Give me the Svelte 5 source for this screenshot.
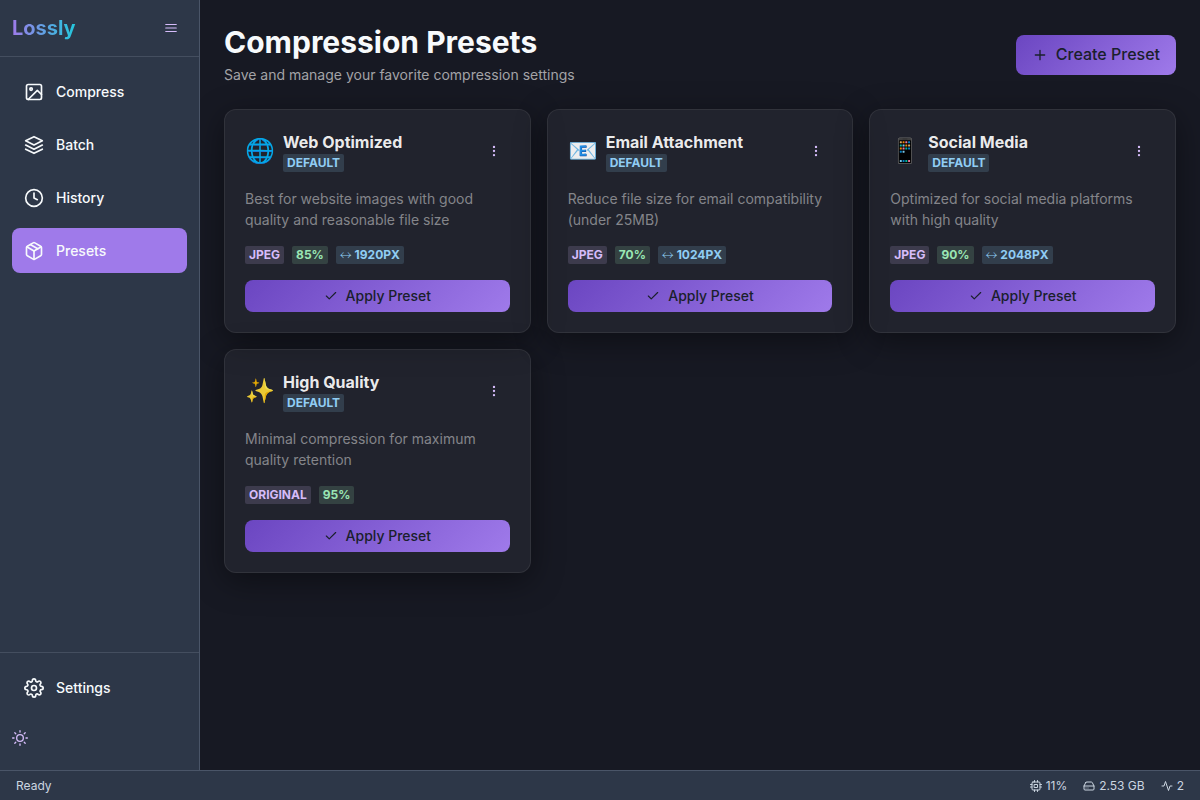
<script>
  const icons = {
    image: '<rect x="3" y="3" width="18" height="18" rx="2" ry="2"/><circle cx="8.5" cy="8.5" r="1.5"/><polyline points="21 15 16 10 5 21"/>',
    layers: '<polygon points="12 2 2 7 12 12 22 7 12 2"/><polyline points="2 17 12 22 22 17"/><polyline points="2 12 12 17 22 12"/>',
    clock: '<circle cx="12" cy="12" r="10"/><polyline points="12 6 12 12 16 14"/>',
    box: '<line x1="16.5" y1="9.4" x2="7.5" y2="4.21"/><path d="M21 16V8a2 2 0 0 0-1-1.73l-7-4a2 2 0 0 0-2 0l-7 4A2 2 0 0 0 3 8v8a2 2 0 0 0 1 1.73l7 4a2 2 0 0 0 2 0l7-4A2 2 0 0 0 21 16z"/><polyline points="3.27 6.96 12 12.01 20.73 6.96"/><line x1="12" y1="22.08" x2="12" y2="12"/>',
    settings: '<circle cx="12" cy="12" r="3"/><path d="M19.4 15a1.65 1.65 0 0 0 .33 1.82l.06.06a2 2 0 0 1 0 2.83 2 2 0 0 1-2.83 0l-.06-.06a1.65 1.65 0 0 0-1.82-.33 1.65 1.65 0 0 0-1 1.51V21a2 2 0 0 1-2 2 2 2 0 0 1-2-2v-.09A1.65 1.65 0 0 0 9 19.4a1.65 1.65 0 0 0-1.82.33l-.06.06a2 2 0 0 1-2.83 0 2 2 0 0 1 0-2.83l.06-.06a1.65 1.65 0 0 0 .33-1.82 1.65 1.65 0 0 0-1.51-1H3a2 2 0 0 1-2-2 2 2 0 0 1 2-2h.09A1.65 1.65 0 0 0 4.6 9a1.65 1.65 0 0 0-.33-1.82l-.06-.06a2 2 0 0 1 0-2.83 2 2 0 0 1 2.83 0l.06.06a1.65 1.65 0 0 0 1.82.33H9a1.65 1.65 0 0 0 1-1.51V3a2 2 0 0 1 2-2 2 2 0 0 1 2 2v.09a1.65 1.65 0 0 0 1 1.51 1.65 1.65 0 0 0 1.82-.33l.06-.06a2 2 0 0 1 2.83 0 2 2 0 0 1 0 2.83l-.06.06a1.65 1.65 0 0 0-.33 1.82V9a1.65 1.65 0 0 0 1.51 1H21a2 2 0 0 1 2 2 2 2 0 0 1-2 2h-.09a1.65 1.65 0 0 0-1.51 1z"/>',
    sun: '<circle cx="12" cy="12" r="5"/><path d="M12 1v2M12 21v2M4.22 4.22l1.42 1.42M18.36 18.36l1.42 1.42M1 12h2M21 12h2M4.22 19.78l1.42-1.42M18.36 5.64l1.42-1.42"/>',
    menu: '<path d="M3 12h18M3 6h18M3 18h18"/>',
    plus: '<path d="M12 5v14M5 12h14"/>',
    check: '<polyline points="20 6 9 17 4 12"/>',
    more: '<circle cx="12" cy="12" r="1"/><circle cx="12" cy="5" r="1"/><circle cx="12" cy="19" r="1"/>',
    cpu: '<rect x="4" y="4" width="16" height="16" rx="2" ry="2"/><rect x="9" y="9" width="6" height="6"/><path d="M9 1v3M15 1v3M9 20v3M15 20v3M20 9h3M20 14h3M1 9h3M1 14h3"/>',
    drive: '<path d="M22 12H2"/><path d="M5.45 5.11L2 12v6a2 2 0 0 0 2 2h16a2 2 0 0 0 2-2v-6l-3.45-6.89A2 2 0 0 0 16.76 4H7.24a2 2 0 0 0-1.79 1.11z"/><path d="M6 16h.01M10 16h.01"/>',
    activity: '<polyline points="22 12 18 12 15 21 9 3 6 12 2 12"/>'
  };

  const nav = [
    { icon: 'image', label: 'Compress' },
    { icon: 'layers', label: 'Batch' },
    { icon: 'clock', label: 'History' },
    { icon: 'box', label: 'Presets', active: true }
  ];

  const presets = [
    { emoji: '🌐', name: 'Web Optimized', text: 'Best for website images with good quality and reasonable file size', format: 'jpeg', quality: 85, width: 1920 },
    { emoji: '📧', name: 'Email Attachment', text: 'Reduce file size for email compatibility (under 25MB)', format: 'jpeg', quality: 70, width: 1024 },
    { emoji: '📱', name: 'Social Media', text: 'Optimized for social media platforms with high quality', format: 'jpeg', quality: 90, width: 2048 },
    { emoji: '✨', name: 'High Quality', text: 'Minimal compression for maximum quality retention', format: 'original', quality: 95 }
  ];

  const stats = [
    { icon: 'cpu', value: '11%' },
    { icon: 'drive', value: '2.53 GB' },
    { icon: 'activity', value: '2' }
  ];
</script>

{#snippet icon(name, size)}
  <svg class="icon" width={size} height={size} viewBox="0 0 24 24" fill="none" stroke="currentColor" stroke-width="2" stroke-linecap="round" stroke-linejoin="round" aria-hidden="true">{@html icons[name]}</svg>
{/snippet}

<div class="app">
  <div class="body">
    <aside>
      <div class="brand">
        <span class="logo">Lossly</span>
        <button class="ghost" aria-label="Toggle sidebar">{@render icon('menu', 14)}</button>
      </div>
      <nav>
        {#each nav as item}
          <button class="item" class:active={item.active}>{@render icon(item.icon, 20)}<span>{item.label}</span></button>
        {/each}
      </nav>
      <div class="foot">
        <button class="item">{@render icon('settings', 20)}<span>Settings</span></button>
        <button class="theme" aria-label="Toggle theme">{@render icon('sun', 16)}</button>
      </div>
    </aside>

    <main>
      <header>
        <div>
          <h1>Compression Presets</h1>
          <p>Save and manage your favorite compression settings</p>
        </div>
        <button class="primary create">{@render icon('plus', 16)}Create Preset</button>
      </header>
      <div class="grid">
        {#each presets as p}
          <article>
            <div class="top">
              <span class="emoji">{p.emoji}</span>
              <div class="title">
                <h2>{p.name}</h2>
                <span class="badge blue">Default</span>
              </div>
              <button class="ghost" aria-label="Options">{@render icon('more', 14)}</button>
            </div>
            <p class="desc">{p.text}</p>
            <div class="tags">
              <span class="badge purple">{p.format}</span>
              <span class="badge green">{p.quality}%</span>
              {#if p.width}<span class="badge blue"><span class="arrow">↔</span> {p.width}px</span>{/if}
            </div>
            <button class="primary apply">{@render icon('check', 14)}Apply Preset</button>
          </article>
        {/each}
      </div>
    </main>
  </div>

  <footer>
    <span>Ready</span>
    <div class="stats">
      {#each stats as s}
        <span class="stat">{@render icon(s.icon, 12)}{s.value}</span>
      {/each}
    </div>
  </footer>
</div>

<style>
  :global(body) { background: #171923; }
  .app { height: 100vh; display: flex; flex-direction: column; overflow: hidden; font: 14px/1.5 Inter, sans-serif; color: #f7fafc; }
  .app *, .app { box-sizing: border-box; }
  h1, h2, p { margin: 0; }
  button { font: inherit; color: inherit; border: 0; background: none; padding: 0; cursor: pointer; }
  .icon { display: block; flex: none; }
  .body { flex: 1; display: flex; min-height: 0; }
  aside { width: 200px; flex: none; display: flex; flex-direction: column; background: #2d3748; border-right: 1px solid #4a5568; }
  .brand { height: 57px; padding: 0 12px; display: flex; align-items: center; justify-content: space-between; border-bottom: 1px solid #444e5f; }
  .logo { font-size: 20px; font-weight: 700; background: linear-gradient(to right, #9f7aea, #22c8dc); -webkit-background-clip: text; background-clip: text; color: transparent; }
  .ghost { width: 32px; height: 32px; display: flex; align-items: center; justify-content: center; color: #d6bcfa; flex: none; }
  nav { flex: 1; padding: 12px; display: flex; flex-direction: column; gap: 8px; }
  .item { display: flex; align-items: center; gap: 12px; height: 45px; width: 100%; padding: 12px; border-radius: 8px; font-weight: 500; text-align: left; }
  .active { background: #9f7aea; }
  .foot { height: 118px; padding: 12px; border-top: 1px solid #444e5f; display: flex; flex-direction: column; gap: 12px; }
  .theme { width: 16px; height: 32px; display: flex; align-items: center; color: #d6bcfa; }
  main { flex: 1; min-width: 0; padding: 24px; overflow: hidden; }
  header { display: flex; align-items: center; justify-content: space-between; margin-bottom: 24px; }
  h1 { font-size: 30px; line-height: 36px; font-weight: 700; }
  header p { margin-top: 4px; color: #a3a3a7; }
  .primary { display: flex; align-items: center; justify-content: center; gap: 8px; border-radius: 8px; background: linear-gradient(135deg, #6b46c1 0%, #9f7aea 100%); color: #1a202c; font-weight: 500; line-height: 1.2; }
  .create { height: 40px; padding: 0 16px; font-size: 16px; }
  .apply { height: 32px; width: 100%; }
  .grid { display: grid; grid-template-columns: repeat(3, 1fr); gap: 16px; }
  article { display: flex; flex-direction: column; gap: 16px; padding: 20px; border: 1px solid rgba(255, 255, 255, .07); border-radius: 12px; background: rgba(232, 241, 232, .05); box-shadow: 0 8px 32px rgba(0, 0, 0, .42); color: rgba(255, 255, 255, .92); }
  .top { display: flex; align-items: center; gap: 8px; height: 42px; }
  .emoji { font-size: 24px; line-height: 36px; }
  .title { flex: 1; display: flex; flex-direction: column; align-items: flex-start; }
  h2 { font-size: 16px; line-height: 24px; font-weight: 700; }
  .desc { color: #84858a; }
  .tags { display: flex; gap: 8px; }
  .badge { padding: 0 4px; border-radius: 2px; font-size: 12px; line-height: 18px; height: 18px; font-weight: 700; text-transform: uppercase; white-space: nowrap; }
  .arrow { font-family: "Noto Sans CJK JP", sans-serif; font-weight: 300; line-height: 1; vertical-align: -1px; }
  .purple { color: #d6bcfa; background: rgba(214, 188, 250, .16); }
  .green { color: #9ae6b4; background: rgba(154, 230, 180, .16); }
  .blue { color: #90cdf4; background: rgba(144, 205, 244, .16); }
  footer { height: 30px; flex: none; padding: 0 16px; display: flex; align-items: center; justify-content: space-between; font-size: 12px; background: #2d3748; border-top: 1px solid #4a5568; color: #cbd5e0; }
  .stats { display: flex; gap: 16px; }
  .stat { display: flex; align-items: center; gap: 4px; }
</style>
